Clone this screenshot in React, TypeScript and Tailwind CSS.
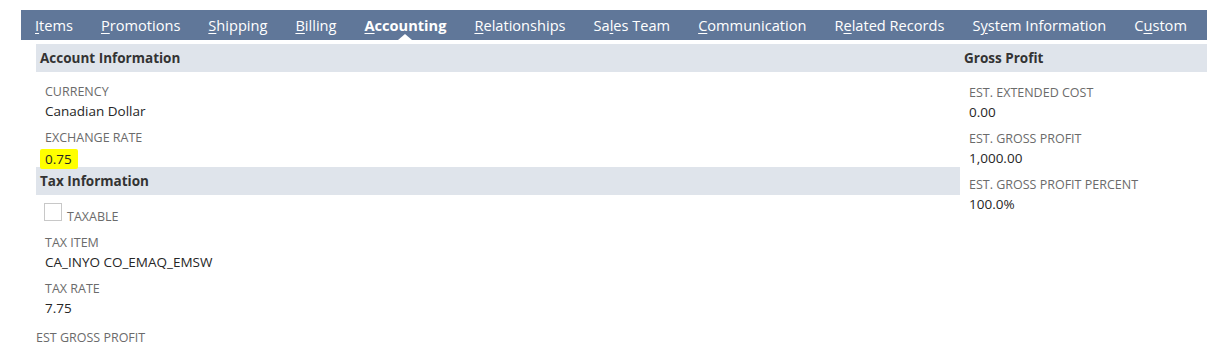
import * as React from "react";

type Tab = { pre: string; key: string; post: string; active?: boolean };

const tabs: Tab[] = [
  { pre: "", key: "I", post: "tems" },
  { pre: "", key: "P", post: "romotions" },
  { pre: "", key: "S", post: "hipping" },
  { pre: "", key: "B", post: "illing" },
  { pre: "", key: "A", post: "ccounting", active: true },
  { pre: "", key: "R", post: "elationships" },
  { pre: "Sa", key: "l", post: "es Team" },
  { pre: "", key: "C", post: "ommunication" },
  { pre: "R", key: "e", post: "lated Records" },
  { pre: "S", key: "y", post: "stem Information" },
  { pre: "C", key: "u", post: "stom" },
];

function Field({ label, value, highlight }: { label: string; value: string; highlight?: boolean }) {
  return (
    <div className="mb-[8px] last:mb-0">
      <div className="text-[12.5px] leading-[18px] uppercase text-[#6b6b6b]">{label}</div>
      <div className="text-[13.5px] leading-[20px] text-[#262626]">
        {highlight ? (
          <span className="relative top-[2px] -ml-[5px] rounded-[2px] bg-[#ffff00] pb-[1px] pl-[5px] pr-[6px] pt-[1px]">
            {value}
          </span>
        ) : (
          value
        )}
      </div>
    </div>
  );
}

function SectionHeader({ title }: { title: string }) {
  return (
    <div className="h-[28px] bg-[#dfe4eb] pl-[4px] text-[13.5px] font-bold leading-[28px] text-[#333333]">
      {title}
    </div>
  );
}

export default function App() {
  return (
    <div className="h-[358px] w-[1207px] overflow-hidden bg-white pt-[10px] font-['Open_Sans',sans-serif]">
      <div className="ml-[21px] flex h-[30px] whitespace-nowrap bg-[#607799]">
        {tabs.map((t) => (
          <div
            key={t.pre + t.key + t.post}
            className={
              "relative shrink-0 px-[14px] text-[14.6px] leading-[31px] text-white " + (t.active ? "font-bold" : "")
            }
          >
            {t.pre}
            <span className="underline underline-offset-[2px]">{t.key}</span>
            {t.post}
            {t.active && (
              <span className="absolute bottom-0 left-1/2 -ml-[7px] h-0 w-0 border-x-[7px] border-b-[6px] border-x-transparent border-b-white" />
            )}
          </div>
        ))}
      </div>

      <div className="ml-[36px] mt-[4px] flex">
        <div className="w-[924px]">
          <SectionHeader title="Account Information" />
          <div className="pl-[9px] pt-[11px]">
            <Field label="Currency" value="Canadian Dollar" />
            <Field label="Exchange Rate" value="0.75" highlight />
          </div>
          <SectionHeader title="Tax Information" />
          <div className="pl-[8px] pt-[8px]">
            <div className="mb-[9px] flex h-[22px] items-start gap-[5px]">
              <div className="h-[18px] w-[18px] border border-[#c8c8c8] bg-white" />
              <div className="pt-[5px] text-[12.5px] leading-[18px] text-[#6b6b6b]">TAXABLE</div>
            </div>
            <div className="pl-[1px]">
              <Field label="Tax Item" value="CA_INYO CO_EMAQ_EMSW" />
              <Field label="Tax Rate" value="7.75" />
            </div>
          </div>
        </div>
        <div className="flex-1">
          <SectionHeader title="Gross Profit" />
          <div className="pl-[9px] pt-[12px]">
            <Field label="Est. Extended Cost" value="0.00" />
            <Field label="Est. Gross Profit" value="1,000.00" />
            <Field label="Est. Gross Profit Percent" value="100.0%" />
          </div>
        </div>
      </div>

      <div className="ml-[36px] mt-[11px] text-[12.5px] leading-[18px] text-[#6b6b6b]">EST GROSS PROFIT</div>
    </div>
  );
}
